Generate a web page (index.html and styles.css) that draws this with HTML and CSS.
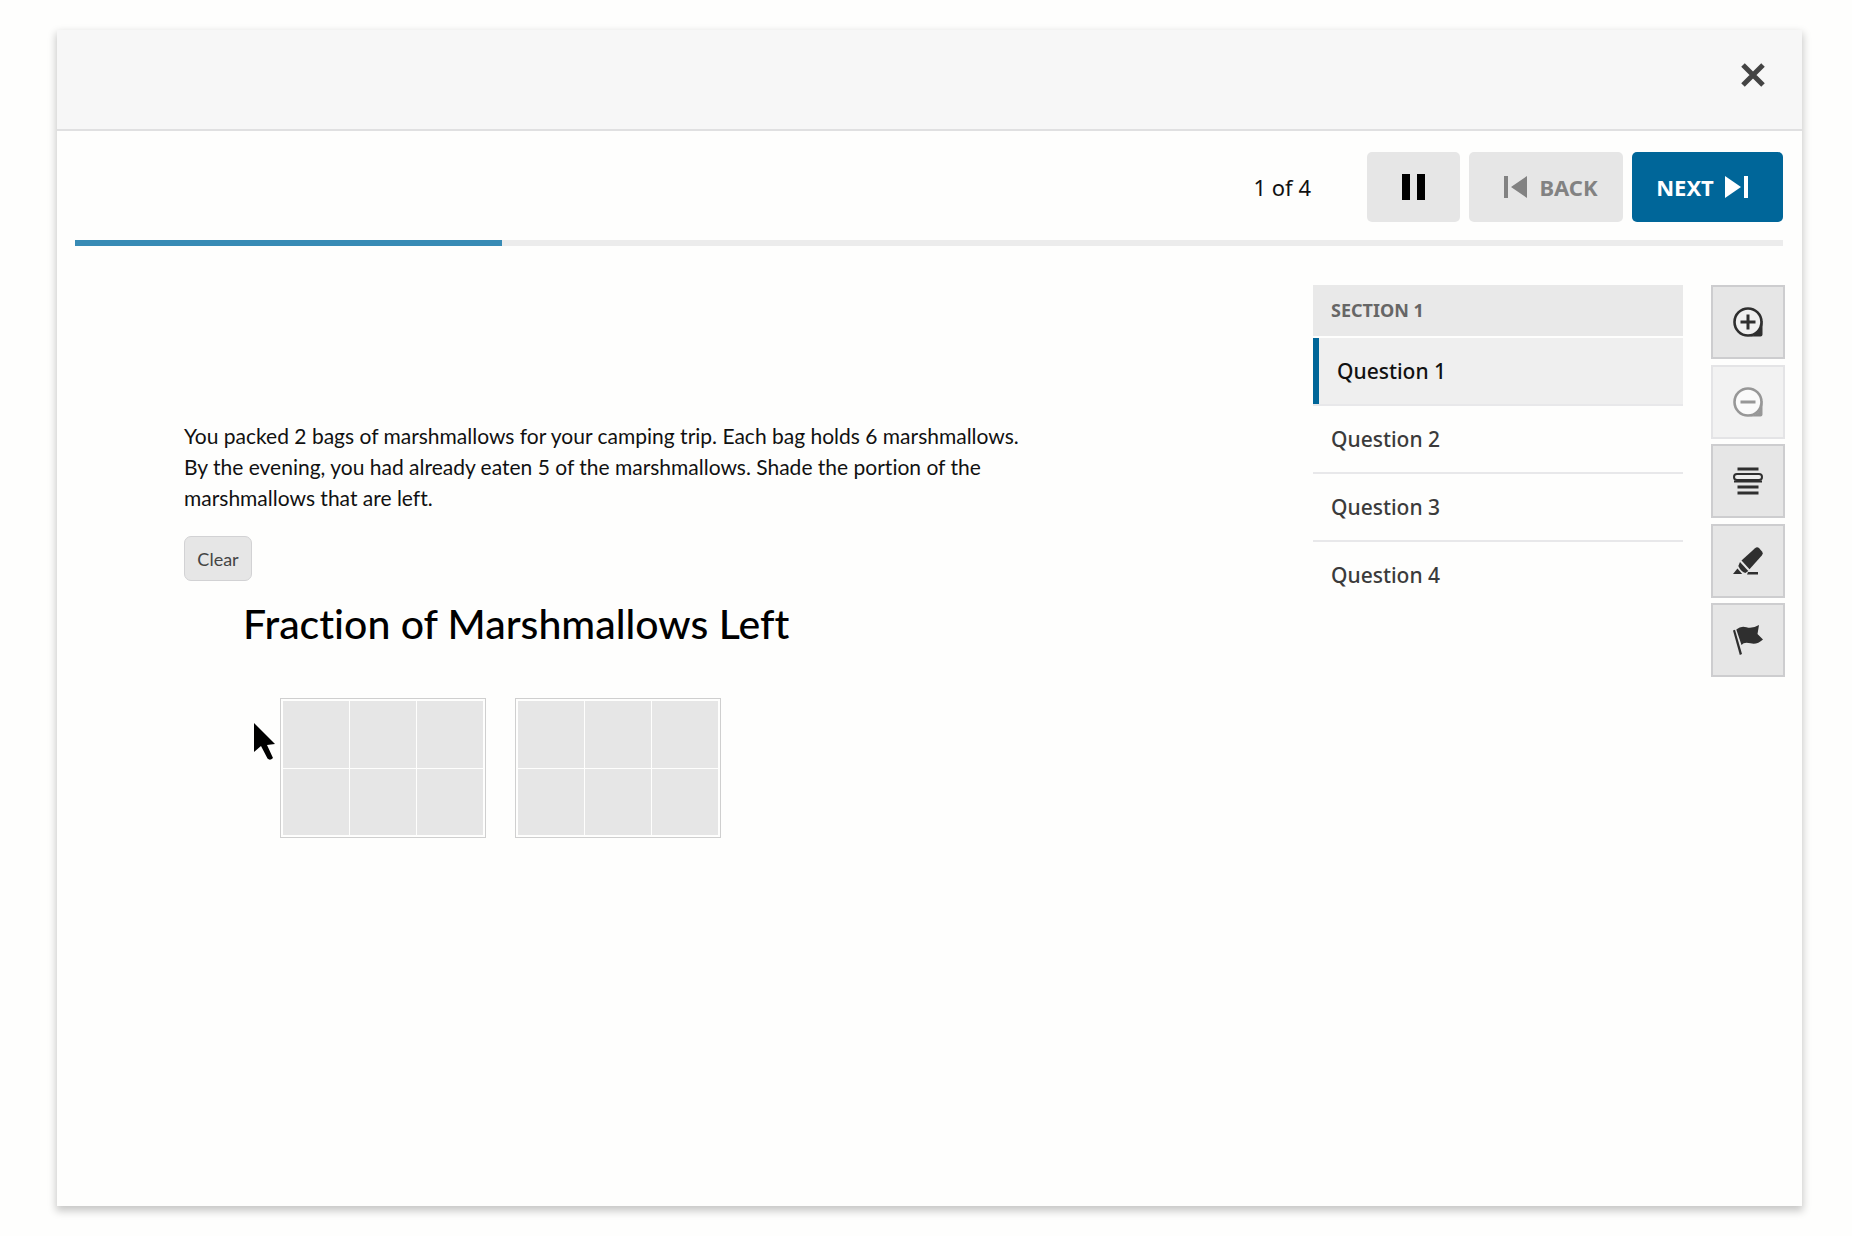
FILE: index.html
```html
<!DOCTYPE html>
<html lang="en">
<head>
<meta charset="utf-8">
<meta name="viewport" content="width=device-width, initial-scale=1">
<title>Question 1 of 4</title>
<link rel="stylesheet" href="styles.css">
</head>
<body>
<div class="player">
  <header class="player-header">
    <button class="close" type="button" aria-label="Close">
      <svg width="26" height="26" viewBox="0 0 26 26"><path d="M3 3 23 23M23 3 3 23" stroke="#444" stroke-width="5" fill="none"/></svg>
    </button>
  </header>

  <div class="toolbar">
    <span class="counter">1 of 4</span>
    <div class="nav-buttons">
      <button class="btn btn-pause" type="button" aria-label="Pause">
        <svg width="24" height="26" viewBox="0 0 24 26" fill="currentColor"><path d="M0 0h8v26H0zM15 0h8v26h-8z"/></svg>
      </button>
      <button class="btn btn-back" type="button" disabled>
        <svg width="24" height="24" viewBox="0 0 24 24" fill="currentColor"><path d="M0 1h4v22H0zM23 1v22L7 12z"/></svg>
        BACK
      </button>
      <button class="btn btn-next" type="button">
        NEXT
        <svg width="24" height="24" viewBox="0 0 24 24" fill="currentColor"><path d="M19 1h4v22h-4zM0 1v22l16-11z"/></svg>
      </button>
    </div>
  </div>
  <div class="progress" role="progressbar" aria-label="Progress" aria-valuenow="1" aria-valuemin="0" aria-valuemax="4"><div class="progress-bar" style="width: 25%"></div></div>

  <div class="content">
    <main class="question">
      <p class="prompt">You packed 2 bags of marshmallows for your camping trip. Each bag holds 6 marshmallows. By the evening, you had already eaten 5 of the marshmallows. Shade the portion of the marshmallows that are left.</p>
      <button class="clear" type="button">Clear</button>
      <h1 class="chart-title">Fraction of Marshmallows Left</h1>
      <div class="bags">
        <div class="bag" role="group" aria-label="Bag 1">
          <button class="cell" type="button" aria-label="Marshmallow 1"></button>
          <button class="cell" type="button" aria-label="Marshmallow 2"></button>
          <button class="cell" type="button" aria-label="Marshmallow 3"></button>
          <button class="cell" type="button" aria-label="Marshmallow 4"></button>
          <button class="cell" type="button" aria-label="Marshmallow 5"></button>
          <button class="cell" type="button" aria-label="Marshmallow 6"></button>
        </div>
        <div class="bag" role="group" aria-label="Bag 2">
          <button class="cell" type="button" aria-label="Marshmallow 1"></button>
          <button class="cell" type="button" aria-label="Marshmallow 2"></button>
          <button class="cell" type="button" aria-label="Marshmallow 3"></button>
          <button class="cell" type="button" aria-label="Marshmallow 4"></button>
          <button class="cell" type="button" aria-label="Marshmallow 5"></button>
          <button class="cell" type="button" aria-label="Marshmallow 6"></button>
        </div>
        <svg class="pointer" width="22" height="38" viewBox="0 0 22 38"><path d="M0 0v29l7-6 6.500 12.500q2.500 2.500 5.500-.5L13 22l8-1z" fill="#000"/></svg>
      </div>
    </main>

    <nav class="outline" aria-label="Questions">
      <h2 class="outline-heading">SECTION 1</h2>
      <ul class="outline-list">
        <li><a class="outline-link is-current" href="#q1" aria-current="page">Question 1</a></li>
        <li><a class="outline-link" href="#q2">Question 2</a></li>
        <li><a class="outline-link" href="#q3">Question 3</a></li>
        <li><a class="outline-link" href="#q4">Question 4</a></li>
      </ul>
    </nav>

    <div class="tools">
      <button class="tool" type="button" aria-label="Zoom in">
        <svg width="30" height="30" viewBox="0 0 30 30"><path d="M29.500 14V27.500a2 2 0 0 1-2 2H15A14 14 0 0 0 29 14z" fill="#2f2f2f"/><path d="M28 19v9h-9z" fill="#2f2f2f"/><circle cx="15" cy="15" r="13.500" fill="#f0f0f0" stroke="#2f2f2f" stroke-width="2.600"/><path d="M15 7.500v15M7.500 15h15" stroke="#2f2f2f" stroke-width="3"/></svg>
      </button>
      <button class="tool" type="button" aria-label="Zoom out" disabled>
        <svg width="30" height="30" viewBox="0 0 30 30"><path d="M29.500 14V27.500a2 2 0 0 1-2 2H15A14 14 0 0 0 29 14z" fill="#979797"/><circle cx="15" cy="15" r="13.500" fill="#fafafa" stroke="#979797" stroke-width="2.600"/><path d="M7.500 15h15" stroke="#979797" stroke-width="3"/></svg>
      </button>
      <button class="tool" type="button" aria-label="Line reader">
        <svg width="30" height="28" viewBox="0 0 30 28"><path d="M4.500 2h21M4.500 20h21M4.500 26h21" stroke="#2f2f2f" stroke-width="3"/><rect x="1" y="7" width="28" height="6" rx="3" fill="#eee" stroke="#2f2f2f" stroke-width="2"/><path d="M1 14.500h28" stroke="#2f2f2f" stroke-width="2"/></svg>
      </button>
      <button class="tool" type="button" aria-label="Highlighter">
        <svg width="30" height="30" viewBox="0 0 30 30" fill="#2f2f2f"><path d="M8.500 14.500 22 2.200q2-1.700 4-.2l3 3.400q1.500 2-.2 4L16.500 23.200z"/><path d="m7 16 8.300 9-3 2q-2.500-.8-4-2.400T5.300 20z"/><path d="M4.500 22.500 9.200 28H0z"/><path d="M15 26h10v2.500H14z"/></svg>
      </button>
      <button class="tool" type="button" aria-label="Flag">
        <svg width="30" height="32" viewBox="0 0 30 32" fill="#2f2f2f"><path d="M0 6.500l2-.7L9 30l-2.200 1z"/><path d="M3.300 5.500Q8 1.500 13.500 3.300T26 1l-1.500 9 5.500 5.500Q24 21 17.500 19.300T8.500 21z"/></svg>
      </button>
    </div>
  </div>
</div>
</body>
</html>
```
FILE: styles.css
```css
*, *::before, *::after { box-sizing: border-box; }

body {
  margin: 0;
  padding: 30px 50px 30px 57px;
  min-height: 100vh;
  display: flex;
  background: #fefefd;
  color: #111;
  font-family: "Noto Sans", "Open Sans", sans-serif;
  font-size: 22px;
}

button { font: inherit; color: inherit; border: 0; padding: 0; margin: 0; }
svg { display: block; flex: none; }

.player {
  flex: 1;
  background: #fefefd;
  box-shadow: 0 4px 8px 1px rgba(0, 0, 0, .22);
}

.player-header {
  display: flex;
  justify-content: flex-end;
  align-items: center;
  height: 101px;
  padding: 0 32px 10px;
  background: #f7f7f7;
  border-bottom: 2px solid #e0e0e1;
}

.close { padding: 4px; background: none; }

.toolbar {
  display: flex;
  justify-content: flex-end;
  align-items: center;
  gap: 56px;
  padding: 21px 19px 18px 18px;
}

.counter { font-size: 22px; line-height: 30px; }
.nav-buttons { display: flex; gap: 9px; }

.btn {
  display: flex;
  align-items: center;
  justify-content: center;
  gap: 11px;
  height: 70px;
  border-radius: 5px;
  background: #e6e6e6;
  font-size: 22px;
  font-weight: 700;
}

.btn-pause { width: 93px; color: #000; }
.btn-back { width: 154px; padding-left: 10px; color: #828282; }
.btn-next { width: 151px; background: #006699; color: #fff; padding-right: 10px; }

.progress { height: 6px; margin: 0 19px 0 18px; background: #ececec; }
.progress-bar { height: 100%; background: #388bb5; }

.content {
  display: flex;
  align-items: flex-start;
  padding: 39px 17px 40px 127px;
}

.question {
  flex: 1;
  padding-top: 135px;
  font-family: Lato, sans-serif;
  font-variant-ligatures: none;
}

.prompt {
  max-width: 850px;
  margin: 0 0 23px;
  font-size: 21px;
  line-height: 31px;
}

.clear {
  width: 68px;
  height: 45px;
  border: 1px solid #d2d2d4;
  border-radius: 7px;
  background: #e6e6e6;
  color: #444;
  font-size: 18px;
}

.chart-title {
  margin: 18px 0 49px 59px;
  font-family: "Lato Medium", Lato, sans-serif;
  font-size: 41px;
  line-height: 50px;
  font-weight: 500;
  color: #000;
}

.bags {
  position: relative;
  display: flex;
  gap: 29px;
  padding-left: 96px;
}

.bag {
  display: grid;
  grid-template-columns: repeat(3, 1fr);
  gap: 1px;
  width: 206px;
  height: 140px;
  padding: 2px;
  border: 1px solid #cfcfcf;
  background: #fefefd;
}

.cell { background: #e6e6e6; border-radius: 0; }

.pointer { position: absolute; left: 70px; top: 25px; }

.outline { width: 370px; }

.outline-heading {
  margin: 0 0 2px;
  padding: 0 18px;
  background: #e9e9e9;
  color: #666;
  font-size: 18px;
  line-height: 51px;
  font-weight: 700;
}

.outline-list { margin: 0; padding: 0; list-style: none; }

.outline-link {
  display: block;
  padding: 0 18px;
  border-bottom: 2px solid #e8e8ea;
  color: #3b3b3b;
  font-size: 21px;
  line-height: 66px;
  font-weight: 500;
  text-decoration: none;
}

.outline-link.is-current {
  background: #efefef;
  color: #111;
  box-shadow: inset 6px 0 #006699;
  padding-left: 24px;
}

.outline-list li:last-child .outline-link { border-bottom: 0; }

.tools {
  display: flex;
  flex-direction: column;
  justify-content: space-between;
  height: 392px;
  margin-left: 28px;
}

.tool {
  display: grid;
  place-items: center;
  width: 74px;
  height: 74px;
  border: 2px solid #cdcdcf;
  background: #e6e6e6;
}

.tool:disabled { border-color: #e4e4e6; background: #f2f2f2; }
```
